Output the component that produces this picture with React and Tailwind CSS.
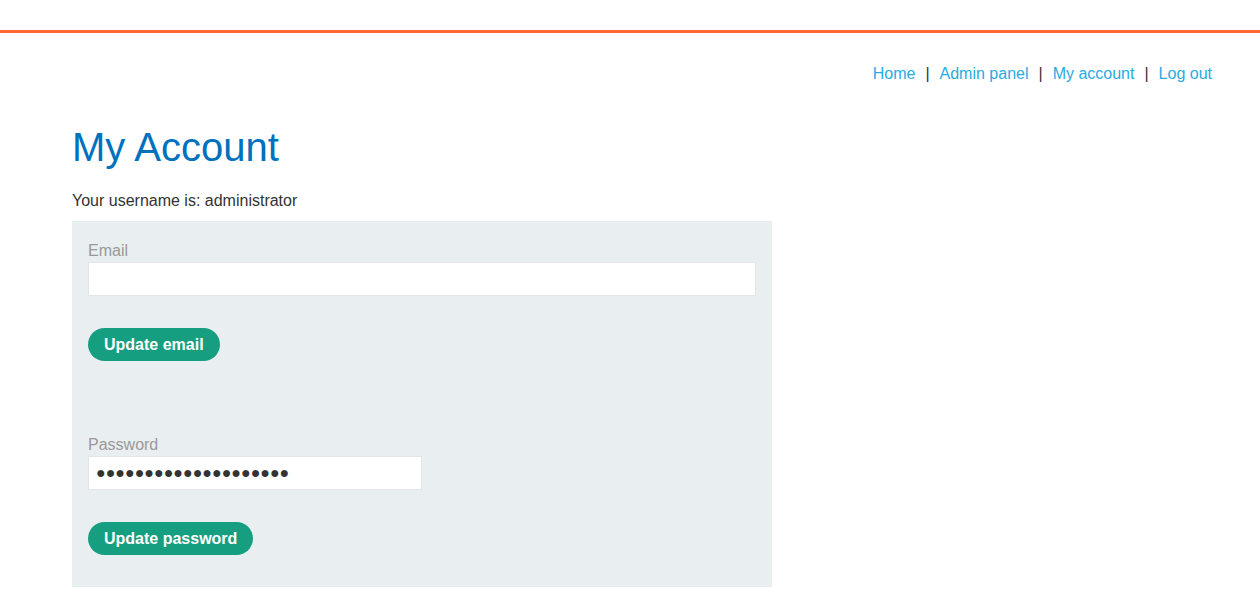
export default function App() {
  return (
    <div className="min-h-[604px] bg-white text-[#333] text-[16px]" style={{ fontFamily: '"Liberation Sans", Arial, sans-serif' }}>
      <div className="h-[30px] border-b-[3px] border-[#ff6633] box-content"></div>
      <div className="flex justify-end pr-[48px] pt-[32px] leading-[18px]">
        <a className="text-[#29abe2]" href="#">Home</a>
        <span className="mx-[10px] text-[#333]">|</span>
        <a className="text-[#29abe2]" href="#">Admin panel</a>
        <span className="mx-[10px] text-[#333]">|</span>
        <a className="text-[#29abe2]" href="#">My account</a>
        <span className="mx-[10px] text-[#333]">|</span>
        <a className="text-[#29abe2]" href="#">Log out</a>
      </div>
      <div className="px-[72px]">
        <h1 className="mt-[41px] text-[40px] leading-[46px] text-[#0071bc] font-normal">My Account</h1>
        <p className="mt-[22px] leading-[18px]">Your username is: administrator</p>
        <div className="mt-[11px] w-[700px] bg-[#e9eef1] px-[16px] pt-[21px] pb-[32px]">
          <label className="block leading-[18px] text-[#999]">Email</label>
          <input type="email" className="mt-[2px] block w-full h-[34px] bg-white border border-[#e3e6e8] px-[7px] outline-none" />
          <button className="mt-[32px] block h-[33px] px-[16px] rounded-full bg-[#169e81] text-white font-bold leading-[33px]">Update email</button>
          <label className="mt-[75px] block leading-[18px] text-[#999]">Password</label>
          <input type="text" readOnly value="●●●●●●●●●●●●●●●●●●●●" className="mt-[2px] block w-[334px] h-[34px] bg-white border border-[#e3e6e8] px-[7px] outline-none text-[#333]" />
          <button className="mt-[32px] block h-[33px] px-[16px] rounded-full bg-[#169e81] text-white font-bold leading-[33px]">Update password</button>
        </div>
      </div>
    </div>
  );
}
